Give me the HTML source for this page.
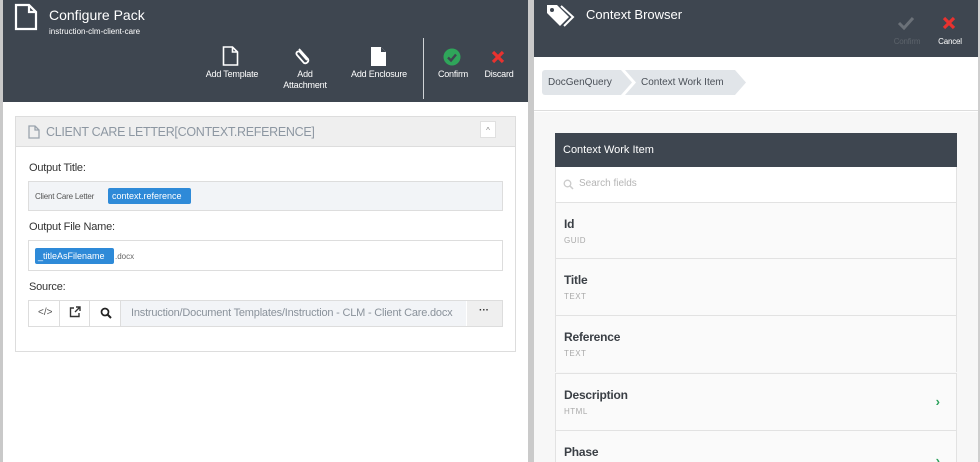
<!DOCTYPE html>
<html><head><style>
*{box-sizing:border-box;margin:0;padding:0}
html,body{width:980px;height:462px;overflow:hidden}
body{font-family:"Liberation Sans",sans-serif;background:#fff;position:relative}
.abs{position:absolute}
.dark{background:#3e4650}
.btn{position:absolute;color:#fff;font-size:9px;text-align:center;line-height:11px;letter-spacing:-.2px}
.lbl{position:absolute;font-size:11px;color:#333;letter-spacing:-.2px}
.row{position:absolute;left:555px;width:402px;height:57px;border-top:1px solid #e2e2e2;background:#fafafa;border-left:1px solid #e2e2e2;border-right:1px solid #e2e2e2}
.row b{position:absolute;left:8px;top:14px;font-size:12px;color:#3a3f45;font-weight:bold;letter-spacing:-.2px}
.row i{position:absolute;left:8px;top:33px;font-size:8px;color:#aaa;font-style:normal;letter-spacing:.5px}
.row s{position:absolute;right:16px;top:20px;color:#2aa05a;text-decoration:none;font-size:13px;font-weight:bold}
</style></head><body>
<div class="abs" style="left:0;top:0;width:3px;height:462px;background:#c9c9c9"></div>
<div class="abs dark" style="left:3px;top:0;width:525px;height:102px"></div>
<svg class="abs" style="left:14px;top:3px" width="24" height="28" viewBox="0 0 24 28"><path d="M2 2h13l7 7v17H2z M15 2v7h7" fill="none" stroke="#fff" stroke-width="2.2"/></svg>
<div class="abs" style="left:49px;top:7px;color:#fff;font-size:14px">Configure Pack</div>
<div class="abs" style="left:49px;top:27px;color:#fff;font-size:8px">instruction-clm-client-care</div>
<svg class="abs" style="left:222px;top:46px" width="17" height="20" viewBox="0 0 17 20"><path d="M1.5 1h9l5 5v13h-14z M10.5 1v5h5" fill="none" stroke="#fff" stroke-width="1.6"/></svg>
<div class="btn" style="left:198px;top:69px;width:68px">Add Template</div>
<svg class="abs" style="left:294px;top:46px" width="18" height="20" viewBox="0 0 18 20"><path d="M5 3l9 10a3 3 0 0 1-4 4L3 9a2 2 0 0 1 3-3l7 8" fill="none" stroke="#fff" stroke-width="1.8"/></svg>
<div class="btn" style="left:275px;top:69px;width:60px">Add<br>Attachment</div>
<svg class="abs" style="left:370px;top:46px" width="17" height="20" viewBox="0 0 17 20"><path d="M1 1h10l5 5v14H1z" fill="#fff"/><path d="M11 1v5h5" fill="#3e4650"/></svg>
<div class="btn" style="left:344px;top:69px;width:70px">Add Enclosure</div>
<div class="abs" style="left:423px;top:38px;width:1px;height:61px;background:#cfd3d6"></div>
<svg class="abs" style="left:443px;top:48px" width="18" height="18" viewBox="0 0 18 18"><circle cx="9" cy="9" r="8.5" fill="#2fa55a"/><path d="M5 9.5l3 3 5-6" fill="none" stroke="#3e4650" stroke-width="2.4"/></svg>
<div class="btn" style="left:430px;top:69px;width:46px">Confirm</div>
<svg class="abs" style="left:491px;top:50px" width="14" height="14" viewBox="0 0 14 14"><path d="M2 2l10 10M12 2L2 12" stroke="#e8322f" stroke-width="3.2"/></svg>
<div class="btn" style="left:478px;top:69px;width:42px">Discard</div>
<div class="abs" style="left:15px;top:116px;width:501px;height:236px;border:1px solid #ddd;background:#fff"></div>
<div class="abs" style="left:16px;top:117px;width:499px;height:30px;background:#efefef;border-bottom:1px solid #ddd"></div>
<svg class="abs" style="left:28px;top:125px" width="12" height="14" viewBox="0 0 12 14"><path d="M1 1h6l4 4v8H1z M7 1v4h4" fill="none" stroke="#9aa3ad" stroke-width="1.3"/></svg>
<div class="abs" style="left:46px;top:125px;font-size:12.5px;color:#8d97a2;letter-spacing:-.3px">CLIENT CARE LETTER[CONTEXT.REFERENCE]</div>
<div class="abs" style="left:480px;top:121px;width:16px;height:17px;background:#fff;border:1px solid #e0e0e0;font-size:8px;color:#888;text-align:center;line-height:17px">^</div>
<div class="lbl" style="left:29px;top:162px">Output Title:</div>
<div class="abs" style="left:28px;top:181px;width:475px;height:30px;background:#f2f4f7;border:1px solid #ddd"></div>
<div class="abs" style="left:35px;top:192px;font-size:8px;color:#555;letter-spacing:-.2px">Client Care Letter</div>
<div class="abs" style="left:108px;top:188px;width:83px;height:16px;background:#2e8ad8;border-radius:2px;color:#fff;font-size:9px;line-height:16px;padding-left:4px">context.reference</div>
<div class="lbl" style="left:29px;top:221px">Output File Name:</div>
<div class="abs" style="left:28px;top:240px;width:475px;height:31px;background:#fff;border:1px solid #ddd"></div>
<div class="abs" style="left:35px;top:248px;width:79px;height:16px;background:#2e8ad8;border-radius:2px;color:#fff;font-size:9px;line-height:16px;padding-left:3px">_titleAsFilename</div>
<div class="abs" style="left:115px;top:252px;font-size:8px;color:#666">.docx</div>
<div class="lbl" style="left:29px;top:281px">Source:</div>
<div class="abs" style="left:28px;top:300px;width:475px;height:27px;border:1px solid #ddd;background:#fff"></div>
<div class="abs" style="left:59px;top:301px;width:1px;height:25px;background:#ddd"></div>
<div class="abs" style="left:89px;top:301px;width:1px;height:25px;background:#ddd"></div>
<div class="abs" style="left:120px;top:301px;width:346px;height:25px;background:#f2f4f7;border-left:1px solid #ddd"></div>
<div class="abs" style="left:467px;top:301px;width:35px;height:25px;background:#efefef"></div>
<div class="abs" style="left:38px;top:307px;font-size:10px;color:#555">&lt;/&gt;</div>
<svg class="abs" style="left:69px;top:306px" width="12" height="12" viewBox="0 0 12 12"><path d="M5 2H1.5v8.5H10V7 M6 6l5-5 M7 1h4v4" fill="none" stroke="#333" stroke-width="1.4"/></svg>
<svg class="abs" style="left:100px;top:307px" width="12" height="12" viewBox="0 0 12 12"><circle cx="5" cy="5" r="3.5" fill="none" stroke="#222" stroke-width="1.7"/><path d="M7.5 7.5l3.5 3.5" stroke="#222" stroke-width="2"/></svg>
<div class="abs" style="left:131px;top:307px;font-size:11px;color:#8a929b;white-space:nowrap;width:332px;overflow:hidden;letter-spacing:-.2px">Instruction/Document Templates/Instruction - CLM - Client Care.docx</div>
<div class="abs" style="left:479px;top:305px;font-size:10px;color:#333;font-weight:bold">···</div>
<div class="abs" style="left:528px;top:0;width:6px;height:462px;background:#cacaca"></div>
<div class="abs dark" style="left:534px;top:0;width:446px;height:57px"></div>
<svg class="abs" style="left:545px;top:3px" width="30" height="26" viewBox="0 0 30 26"><path d="M2 2h10l12 12-9 9L2 10z" fill="#fff"/><circle cx="7" cy="7" r="2" fill="#3e4650"/><path d="M16 3l12 11-9 9" fill="none" stroke="#fff" stroke-width="2"/></svg>
<div class="abs" style="left:586px;top:7px;color:#fff;font-size:13px">Context Browser</div>
<svg class="abs" style="left:897px;top:16px" width="18" height="14" viewBox="0 0 18 14"><path d="M2 7l5 5 9-10" fill="none" stroke="#6b7178" stroke-width="3"/></svg>
<div class="btn" style="left:885px;top:36px;width:44px;color:#5c636b;font-size:8px">Confirm</div>
<svg class="abs" style="left:942px;top:16px" width="14" height="14" viewBox="0 0 14 14"><path d="M2 2l10 10M12 2L2 12" stroke="#e8322f" stroke-width="3.2"/></svg>
<div class="btn" style="left:932px;top:36px;width:36px;font-size:8px">Cancel</div>
<div class="abs" style="left:978px;top:0;width:2px;height:462px;background:#cfcfcf"></div>
<div class="abs" style="left:534px;top:57px;width:444px;height:54px;background:#fff;border-bottom:1px solid #ddd"></div>
<svg class="abs" style="left:542px;top:70px" width="210" height="25" viewBox="0 0 210 25"><path d="M3 0h76l11 12.5L79 25H3a3 3 0 0 1-3-3V3a3 3 0 0 1 3-3z" fill="#e1e5e9"/><path d="M83 0h110l11 12.5L193 25H83l11-12.5z" fill="#e1e5e9"/></svg>
<div class="abs" style="left:548px;top:77px;font-size:10px;color:#4a5058">DocGenQuery</div>
<div class="abs" style="left:641px;top:77px;font-size:10px;color:#4a5058">Context Work Item</div>
<div class="abs" style="left:534px;top:112px;width:444px;height:350px;background:#f7f7f7"></div>
<div class="abs dark" style="left:555px;top:133px;width:402px;height:34px"></div>
<div class="abs" style="left:563px;top:144px;color:#fff;font-size:11px">Context Work Item</div>
<div class="abs" style="left:555px;top:167px;width:402px;height:35px;background:#fff;border-left:1px solid #e2e2e2;border-right:1px solid #e2e2e2"></div>
<svg class="abs" style="left:563px;top:179px" width="11" height="11" viewBox="0 0 11 11"><circle cx="4.5" cy="4.5" r="3.3" fill="none" stroke="#ccc" stroke-width="1.3"/><path d="M7 7l3 3" stroke="#ccc" stroke-width="1.5"/></svg>
<div class="abs" style="left:579px;top:178px;font-size:10px;color:#b5b5b5">Search fields</div>
<div class="row" style="top:202px"><b>Id</b><i>GUID</i></div>
<div class="row" style="top:258px"><b>Title</b><i>TEXT</i></div>
<div class="row" style="top:315px"><b>Reference</b><i>TEXT</i></div>
<div class="row" style="top:373px"><b>Description</b><i>HTML</i><s>›</s></div>
<div class="row" style="top:430px;height:32px"><b>Phase</b><s style="top:22px">›</s></div>
</body></html>
